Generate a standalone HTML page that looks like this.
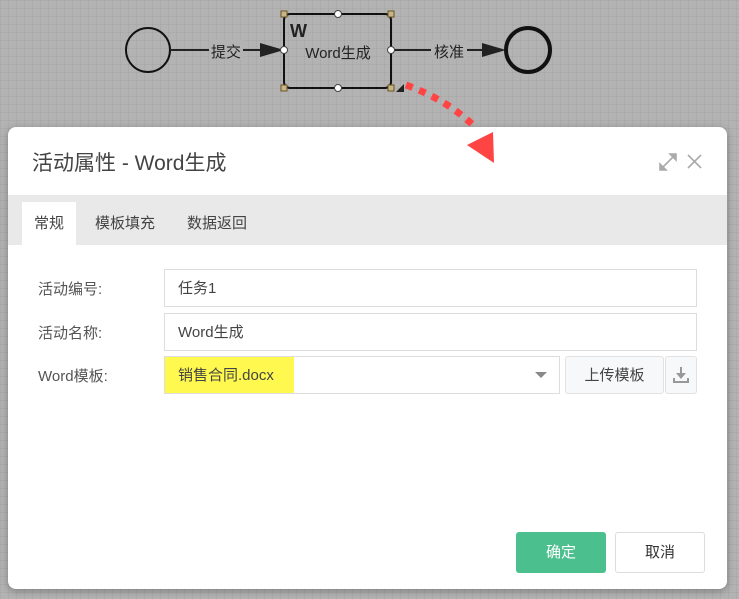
<!DOCTYPE html>
<html><head><meta charset="utf-8"><style>
body{margin:0;width:739px;height:599px;overflow:hidden;background:#b3b3b3;font-family:"Liberation Sans","Noto Sans CJK SC",sans-serif;position:relative;
background-image:linear-gradient(rgba(0,0,0,.04) 1px,transparent 1px),linear-gradient(90deg,rgba(0,0,0,.04) 1px,transparent 1px);background-size:8px 8px}
.dlg{position:absolute;left:8px;top:127px;width:719px;height:462px;background:#fff;border-radius:8px;box-shadow:0 2px 8px rgba(0,0,0,.3)}
.title{position:absolute;left:24px;top:20px;font-size:21px;color:#444}
.tabs{position:absolute;left:0;top:68px;width:719px;height:50px;background:#e9e9e9}
.tab{position:absolute;top:7px;height:43px;line-height:43px;font-size:15px;color:#444}
.lbl{position:absolute;left:30px;font-size:15px;color:#555}
.inp{position:absolute;border:1px solid #ddd;box-sizing:border-box;font-size:15px;color:#444;line-height:38px;padding-left:13px}
.btn{position:absolute;box-sizing:border-box;border-radius:3px;font-size:15px;text-align:center}
</style></head><body>
<svg width="739" height="130" style="position:absolute;left:0;top:0">
<circle cx="148" cy="50" r="22" fill="none" stroke="#111" stroke-width="2"/>
<line x1="170" y1="50" x2="270" y2="50" stroke="#222" stroke-width="2"/>
<polygon points="284,50 260,43 260,57" fill="#222"/>
<rect x="209" y="40" width="34" height="20" fill="#b3b3b3"/>
<text x="226" y="57" font-size="15" text-anchor="middle" fill="#222" font-family="Noto Sans CJK SC">提交</text>
<rect x="284" y="14" width="107" height="74" rx="6" fill="none" stroke="#111" stroke-width="2"/>
<text x="290" y="37" font-size="18" font-weight="bold" fill="#222">W</text>
<text x="338" y="58" font-size="15" text-anchor="middle" fill="#222" font-family="Liberation Sans,Noto Sans CJK SC">Word生成</text>
<line x1="391" y1="50" x2="490" y2="50" stroke="#222" stroke-width="2"/>
<polygon points="506,50 482,43 482,57" fill="#222"/>
<rect x="431" y="40" width="36" height="20" fill="#b3b3b3"/>
<text x="449" y="57" font-size="15" text-anchor="middle" fill="#222" font-family="Noto Sans CJK SC">核准</text>
<circle cx="528" cy="50" r="22" fill="none" stroke="#111" stroke-width="4"/>
<g fill="#fff" stroke="#444"><circle cx="338" cy="14" r="3.5"/><circle cx="338" cy="88" r="3.5"/><circle cx="284" cy="50" r="3.5"/><circle cx="391" cy="50" r="3.5"/></g>
<g fill="#c8b48a" stroke="#6a5520"><rect x="281" y="11" width="6" height="6"/><rect x="388" y="11" width="6" height="6"/><rect x="281" y="85" width="6" height="6"/><rect x="388" y="85" width="6" height="6"/></g>
<polygon points="396,92 404,84 404,92" fill="#222"/>
</svg>
<div class="dlg">
<div class="title">活动属性 - Word生成</div>
<svg width="60" height="20" style="position:absolute;left:650px;top:25px"><g stroke="#aaa" stroke-width="1.6" fill="#aaa"><line x1="4" y1="16" x2="16" y2="4"/><polygon points="2,18 2,12 8,18"/><polygon points="18,2 12,2 18,8"/><line x1="30" y1="3" x2="43" y2="16"/><line x1="43" y1="3" x2="30" y2="16"/></g></svg>
<div class="tabs">
<div class="tab" style="left:14px;width:54px;background:#fff;text-align:center">常规</div>
<div class="tab" style="left:87px">模板填充</div>
<div class="tab" style="left:179px">数据返回</div>
</div>
<div class="lbl" style="top:151px">活动编号:</div>
<div class="lbl" style="top:195px">活动名称:</div>
<div class="lbl" style="top:238px">Word模板:</div>
<div class="inp" style="left:156px;top:142px;width:533px;height:38px">任务1</div>
<div class="inp" style="left:156px;top:186px;width:533px;height:38px">Word生成</div>
<div class="inp" style="left:156px;top:229px;width:396px;height:38px;padding:0;line-height:36px">
<div style="position:absolute;left:0;top:0;width:129px;height:36px;line-height:38px;background:#fff94f;padding-left:13px;box-sizing:border-box">销售合同.docx</div>
<div style="position:absolute;right:12px;top:15px;border-left:6px solid transparent;border-right:6px solid transparent;border-top:6px solid #888"></div></div>
<div class="btn" style="left:557px;top:229px;width:99px;height:38px;background:#f7f8fa;border:1px solid #e2e2e2;line-height:38px;color:#444">上传模板</div>
<div class="btn" style="left:657px;top:229px;width:32px;height:38px;background:#f7f8fa;border:1px solid #e2e2e2">
<svg width="30" height="36"><g stroke="#999" stroke-width="2" fill="#999"><line x1="15" y1="10" x2="15" y2="17"/><polygon points="10,16 20,16 15,22" stroke="none"/><polyline points="8,21 8,25 22,25 22,21" fill="none"/></g></svg></div>
<div class="btn" style="left:508px;top:405px;width:90px;height:41px;background:#4cbf8e;color:#fff;line-height:41px">确定</div>
<div class="btn" style="left:607px;top:405px;width:90px;height:41px;border:1px solid #ddd;color:#333;line-height:39px">取消</div>
</div>
<svg width="739" height="200" style="position:absolute;left:0;top:0">
<path d="M406,85 Q448,100 476,128" fill="none" stroke="#f44" stroke-width="7" stroke-dasharray="7 7"/>
<polygon points="467,145 493,132 494,163" fill="#f44"/>
</svg>
</body></html>
